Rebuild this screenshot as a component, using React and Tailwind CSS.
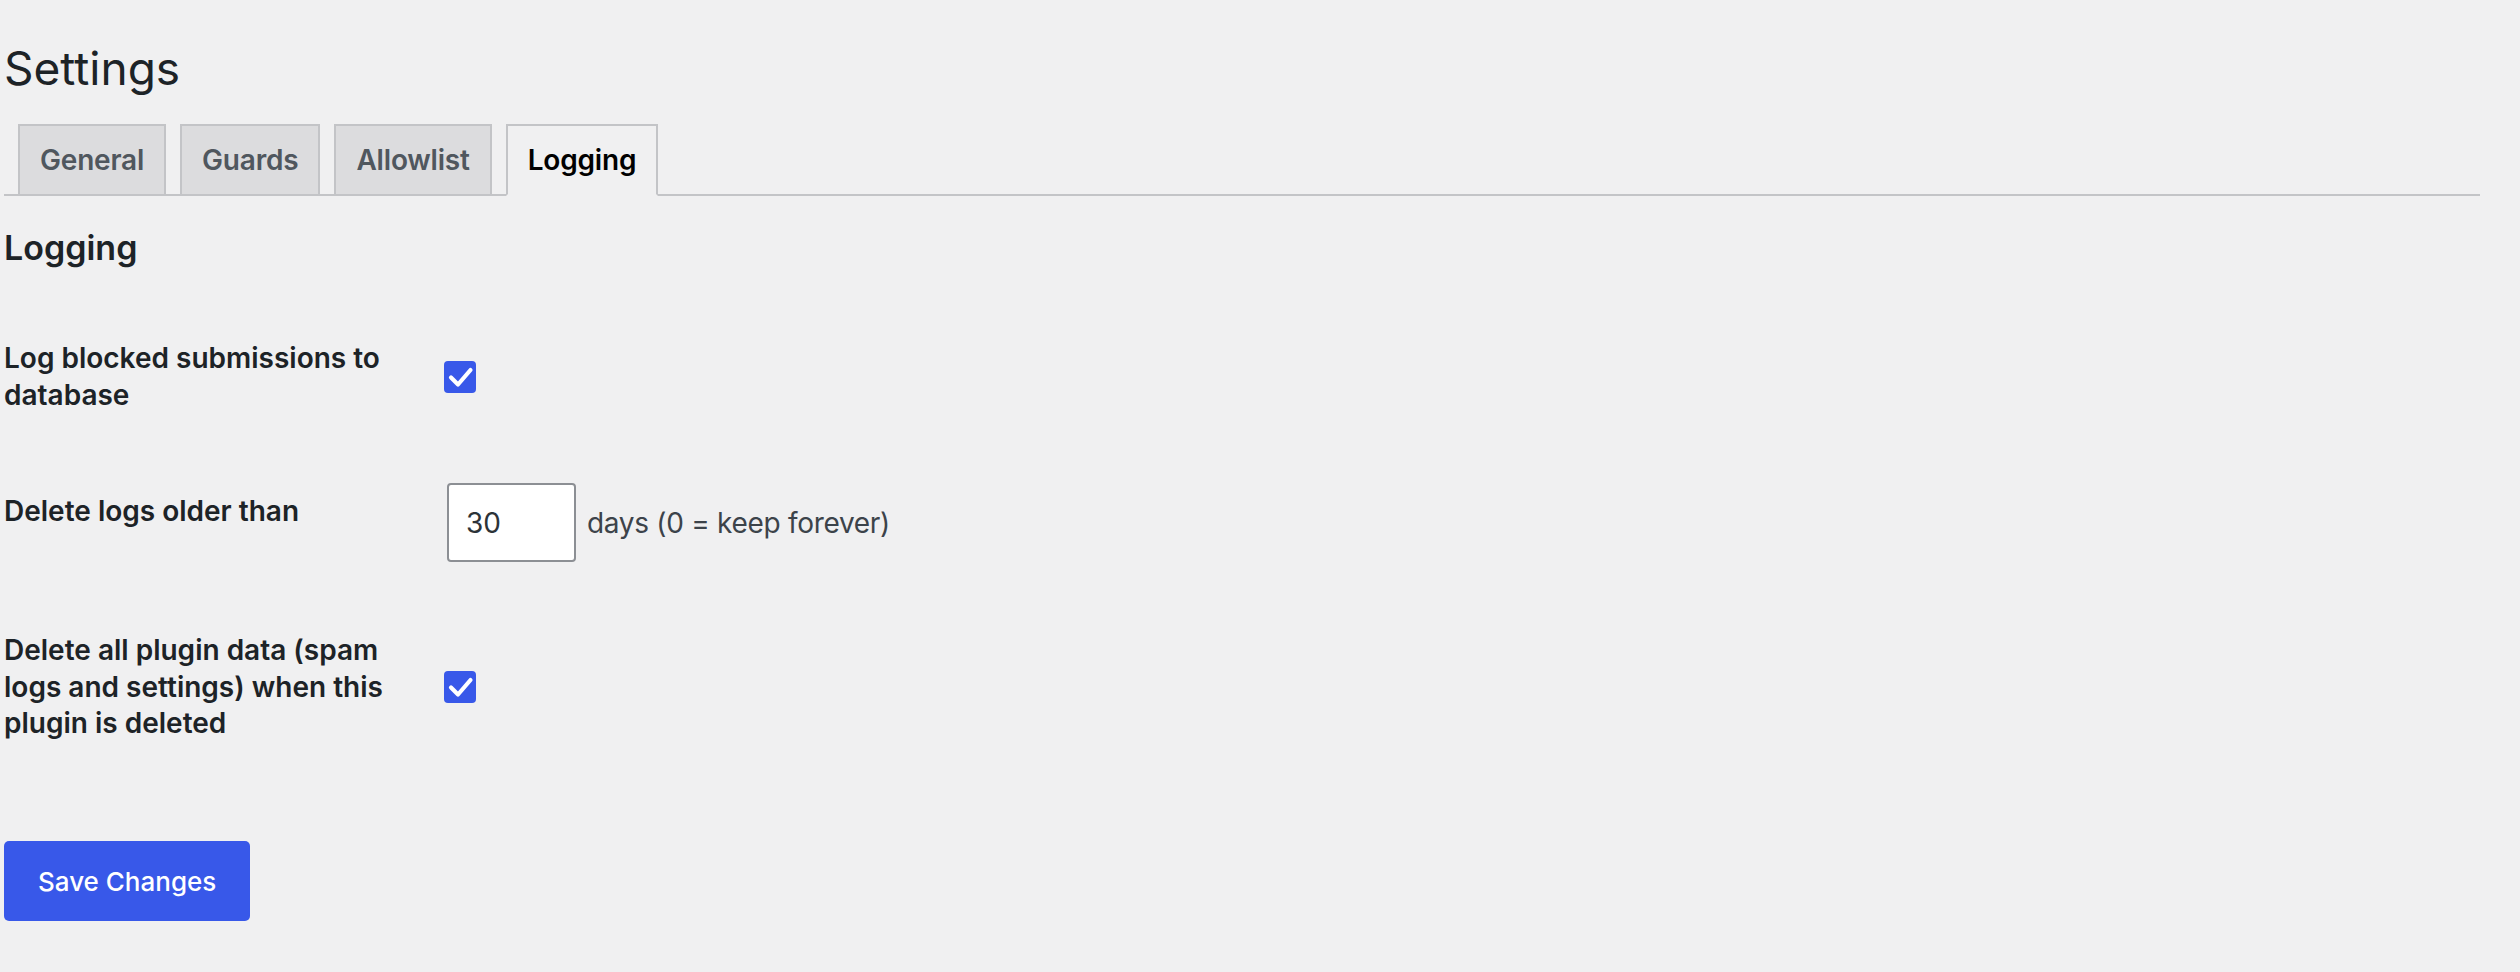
const tabs = ["General", "Guards", "Allowlist", "Logging"];

const Checkbox = ({ checked }) => (
  <span
    role="checkbox"
    aria-checked={checked}
    className="flex h-[32px] w-[32px] items-center justify-center rounded-[4px] bg-[#3858e9]"
  >
    {checked && (
      <svg viewBox="0 0 32 32" className="h-[32px] w-[32px]">
        <path
          d="M7 16.5 L14 23.5 L26.5 9"
          fill="none"
          stroke="#fff"
          strokeWidth="4.2"
          strokeLinecap="round"
          strokeLinejoin="round"
        />
      </svg>
    )}
  </span>
);

const Row = ({ label, children }) => (
  <div className="flex">
    <div className="w-[400px] mr-[20px] py-[40px] text-[28px] leading-[36.4px] font-semibold text-[#1d2327]">
      {label}
    </div>
    <div className="flex items-center py-[30px] pl-[20px]">{children}</div>
  </div>
);

export default function App() {
  const active = "Logging";

  return (
    <div
      className="min-h-screen bg-[#f0f0f1] text-[#1d2327]"
      style={{ fontFamily: "Inter, 'Noto Sans', sans-serif" }}
    >
      <div className="ml-[4px] mr-[40px] pt-[20px]">
        <h1 className="pt-[18px] pb-[8px] text-[46px] font-normal leading-[60px] text-[#1d2327]">
          Settings
        </h1>

        <nav className="flex border-b-2 border-[#c3c4c7] pt-[18px]">
          {tabs.map((t) => (
            <a
              key={t}
              href="#"
              className={
                t === active
                  ? "ml-[14px] -mb-[2px] border-2 border-[#c3c4c7] border-b-[#f0f0f1] bg-[#f0f0f1] px-[20px] py-[10px] text-[28px] leading-[48px] font-semibold tracking-[-0.2px] text-black"
                  : "ml-[14px] -mb-[2px] border-2 border-[#c3c4c7] bg-[#dcdcde] px-[20px] py-[10px] text-[28px] leading-[48px] font-semibold tracking-[-0.2px] text-[#50575e]"
              }
            >
              {t}
            </a>
          ))}
        </nav>

        <h2 className="my-[34px] text-[34px] font-semibold leading-[36.4px]">Logging</h2>

        <div>
          <Row
            label={
              <>
                Log blocked submissions to
                <br />
                database
              </>
            }
          >
            <Checkbox checked />
          </Row>

          <Row label="Delete logs older than">
            <input
              type="text"
              defaultValue="30"
              className="ml-[3px] h-[79px] w-[129px] rounded-[4px] border-2 border-[#8c8f94] bg-white pl-[17px] text-[28px] text-[#2c3338] outline-none"
            />
            <span className="ml-[11px] text-[28px] tracking-[-0.3px] text-[#3c434a]">
              days (0 = keep forever)
            </span>
          </Row>

          <Row
            label={
              <>
                Delete all plugin data (spam
                <br />
                logs and settings) when this
                <br />
                plugin is deleted
              </>
            }
          >
            <Checkbox checked />
          </Row>
        </div>

        <div className="mt-[40px] pt-[20px]">
          <button className="h-[80px] rounded-[5px] bg-[#3858e9] px-[34px] text-[26px] font-medium text-white">
            Save Changes
          </button>
        </div>
      </div>
    </div>
  );
}
